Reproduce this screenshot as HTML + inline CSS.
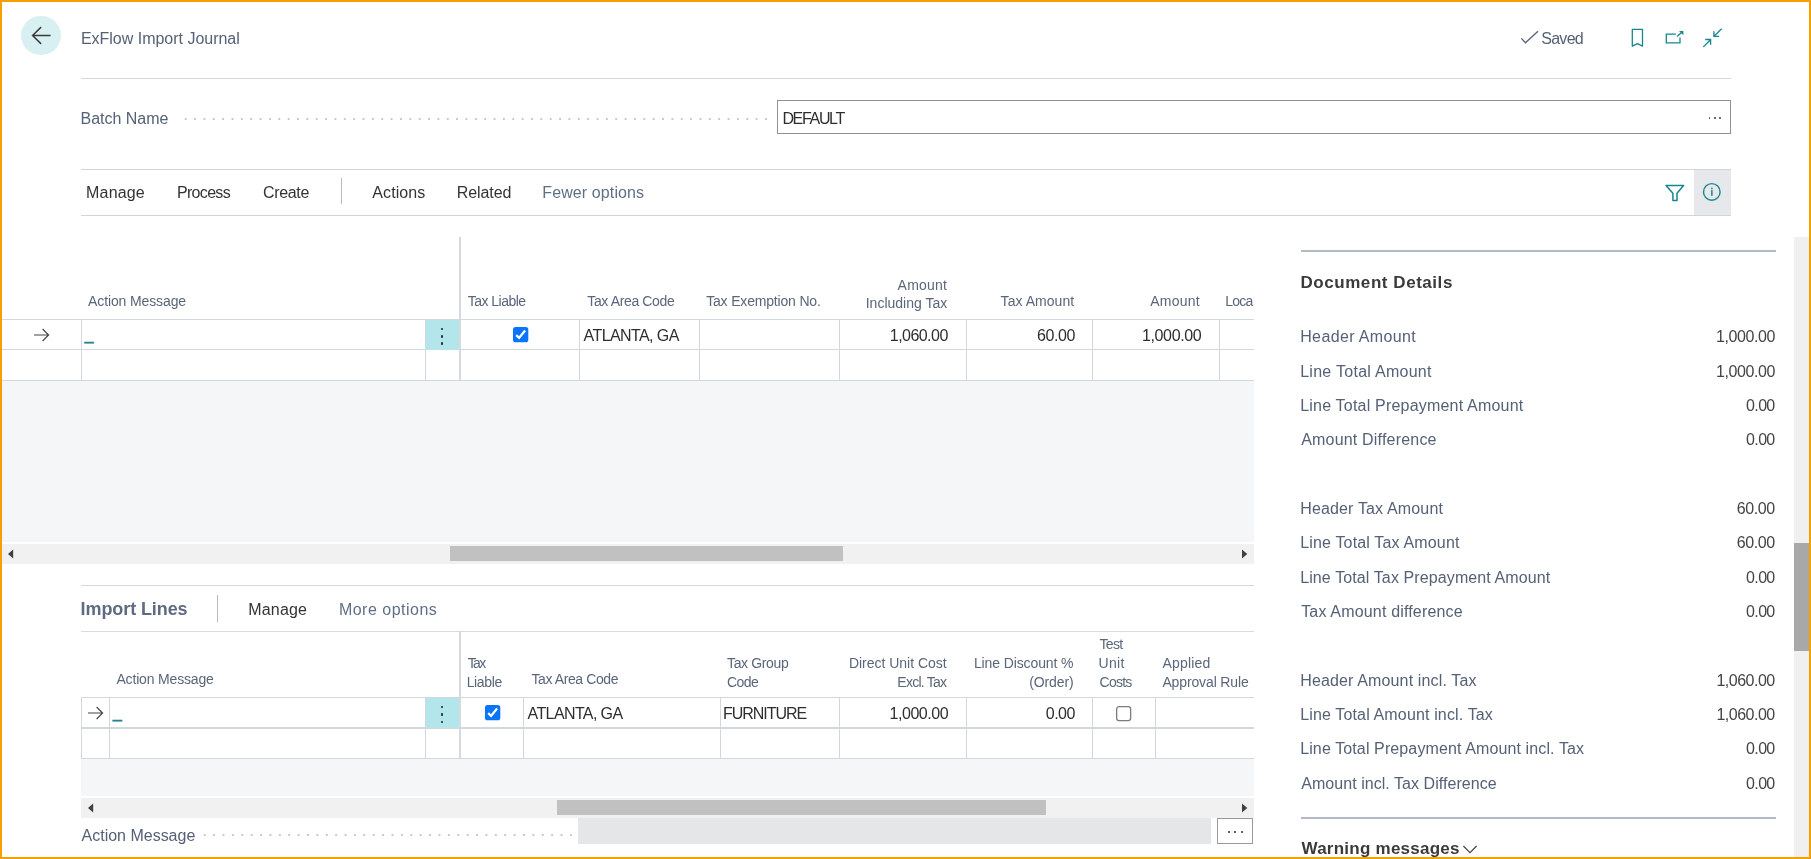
<!DOCTYPE html>
<html lang="en">
<head>
<meta charset="utf-8">
<title>ExFlow Import Journal</title>
<style>
*{box-sizing:border-box;margin:0;padding:0}
html,body{width:1811px;height:859px;overflow:hidden;background:#fff}
body{position:relative;font-family:"Liberation Sans",sans-serif;color:#333}
#page{position:absolute;left:0;top:0;width:1811px;height:859px;overflow:hidden;background:#fff;will-change:transform}
#frame{position:absolute;left:0;top:0;width:1811px;height:859px;border:2px solid #F5A000;z-index:50;pointer-events:none}
.t{position:absolute;white-space:nowrap;line-height:1;display:block}
.b{position:absolute;display:block}
.hl{position:absolute;height:1px;background:#D3D8DE}
.vl{position:absolute;width:1px;background:#D3D8DE}
svg{position:absolute;overflow:visible}
.sb{-webkit-text-stroke:0.45px currentColor}
.bd{font-weight:700}
.us{-webkit-text-stroke:0.5px currentColor}
.clip{position:absolute;overflow:hidden}
</style>
</head>
<body>
<div id="page">
<div class="b" style="left:21.2px;top:15.7px;width:39.8px;height:39.8px;background:#D9F0F2;border-radius:50%;"></div>
<svg style="left:21px;top:15px" width="40" height="40" viewBox="0 0 40 40" ><path d="M29.6 20.5H11.6M20.1 12.1L11.6 20.5L20.1 28.9" fill="none" stroke="#3A3A3A" stroke-width="1.5" stroke-linecap="butt" stroke-linejoin="miter"/></svg>
<div class="b" style="left:81px;top:78px;width:1650px;height:1.2px;background:#D5D9DF;"></div>
<svg style="left:1518px;top:28px" width="24" height="18" viewBox="0 0 24 18" ><path d="M3.4 10.4L7.4 14.8L20 3.2" fill="none" stroke="#55627A" stroke-width="1.3"/></svg>
<svg style="left:1628px;top:26px" width="20" height="24" viewBox="0 0 20 24" ><path d="M4.3 3.3H14.5V20.2L9.4 17.7L4.3 20.2Z" fill="none" stroke="#16878F" stroke-width="1.3" stroke-linejoin="round"/></svg>
<svg style="left:1662px;top:26px" width="26" height="22" viewBox="0 0 26 22" ><path d="M13.9 8.2H4.3V16.8H18V11.6" fill="none" stroke="#16878F" stroke-width="1.3"/><path d="M15.1 10.5L20 6.1" fill="none" stroke="#16878F" stroke-width="1.3"/><path d="M17 5H21.4V9.2Z" fill="#16878F"/></svg>
<svg style="left:1700px;top:26px" width="26" height="24" viewBox="0 0 26 24" ><path d="M21.6 2.8L14.2 10M13.9 5.2V10.4H19.2" fill="none" stroke="#16878F" stroke-width="1.3"/><path d="M3.3 20.9L10.3 14M5.2 13.5H10.6V18.8" fill="none" stroke="#16878F" stroke-width="1.3"/></svg>
<div class="b" style="left:180.72px;top:116.5px;width:590.31px;height:4px;background-image:radial-gradient(circle at center,#C3C9D1 0.95px,transparent 1.4px);background-size:9.37px 4px;background-repeat:repeat-x;"></div>
<div class="b" style="left:777px;top:99.9px;width:954px;height:34.1px;background:#fff;border:1px solid #919191;"></div>
<div class="b" style="left:1708.6999999999998px;top:117.2px;width:1.8px;height:1.8px;background:#444;border-radius:50%;"></div>
<div class="b" style="left:1713.8999999999999px;top:117.2px;width:1.8px;height:1.8px;background:#444;border-radius:50%;"></div>
<div class="b" style="left:1719.1px;top:117.2px;width:1.8px;height:1.8px;background:#444;border-radius:50%;"></div>
<div class="b" style="left:81px;top:169.2px;width:1650px;height:1.3px;background:#D0D5DB;"></div>
<div class="b" style="left:81px;top:214.7px;width:1650px;height:1.3px;background:#D0D5DB;"></div>
<div class="b" style="left:1694.2px;top:170.2px;width:36.8px;height:44.8px;background:#E6E8EB;"></div>
<div class="b" style="left:340.6px;top:178px;width:1.2px;height:26.3px;background:#B5BCC7;"></div>
<svg style="left:1660px;top:180px" width="30" height="26" viewBox="0 0 30 26" ><path d="M6 5.6H23.6L17 13.2V20.4H12.9V13.2Z" fill="none" stroke="#16878F" stroke-width="1.5" stroke-linejoin="round"/></svg>
<svg style="left:1700px;top:180px" width="24" height="24" viewBox="0 0 24 24" ><circle cx="11.8" cy="11.9" r="8.3" fill="none" stroke="#16878F" stroke-width="1.4"/><rect x="11.1" y="10.2" width="1.5" height="5.6" fill="#16878F"/><rect x="11.1" y="7.7" width="1.5" height="1.6" fill="#16878F"/></svg>
<div class="b" style="left:459px;top:237px;width:2px;height:143.5px;background:#D6DAE0;"></div>
<div class="b" style="left:2px;top:319.0px;width:1252px;height:1.2px;background:#D3D8DE;"></div>
<div class="b" style="left:2px;top:349.2px;width:1252px;height:1.2px;background:#D3D8DE;"></div>
<div class="b" style="left:2px;top:379.8px;width:1252px;height:1.2px;background:#D3D8DE;"></div>
<div class="b" style="left:81.0px;top:320px;width:1.0px;height:60px;background:#D3D8DE;"></div>
<div class="b" style="left:425.3px;top:320px;width:1.0px;height:60px;background:#D3D8DE;"></div>
<div class="b" style="left:579.3px;top:320px;width:1.0px;height:60px;background:#D3D8DE;"></div>
<div class="b" style="left:699.0px;top:320px;width:1.0px;height:60px;background:#D3D8DE;"></div>
<div class="b" style="left:839.1px;top:320px;width:1.0px;height:60px;background:#D3D8DE;"></div>
<div class="b" style="left:965.9px;top:320px;width:1.0px;height:60px;background:#D3D8DE;"></div>
<div class="b" style="left:1092.0px;top:320px;width:1.0px;height:60px;background:#D3D8DE;"></div>
<div class="b" style="left:1218.7px;top:320px;width:1.0px;height:60px;background:#D3D8DE;"></div>
<div class="b" style="left:426.3px;top:320.2px;width:32.9px;height:29.4px;background:#B2E6EA;"></div>
<div class="b" style="left:441.3px;top:328.29999999999995px;width:2.2px;height:2.2px;background:#333;border-radius:35%;"></div>
<div class="b" style="left:441.3px;top:335.4px;width:2.2px;height:2.2px;background:#333;border-radius:35%;"></div>
<div class="b" style="left:441.3px;top:342.4px;width:2.2px;height:2.2px;background:#333;border-radius:35%;"></div>
<svg style="left:32.3px;top:325.7px" width="24" height="18" viewBox="0 0 24 18" ><path d="M2 9H16.5M10.6 3L16.6 9L10.6 15" fill="none" stroke="#444" stroke-width="1.15"/></svg>
<svg style="left:512.6px;top:327.1px" width="16" height="16" viewBox="0 0 16 16" ><rect x="0" y="0" width="15.3" height="15.3" rx="2.6" fill="#0A74FA"/><path d="M3.2 8.1L6.1 10.9L12.1 3.6" fill="none" stroke="#fff" stroke-width="2.3" stroke-linecap="butt"/></svg>
<div class="b" style="left:2px;top:381.2px;width:1252px;height:161.3px;background:#F5F6F8;"></div>
<div class="b" style="left:2px;top:543.8px;width:1252px;height:19.8px;background:#F1F1F1;"></div>
<div class="b" style="left:449.7px;top:546px;width:393.2px;height:15px;background:#C1C1C1;"></div>
<svg style="left:5.9px;top:547.6px" width="10" height="12" viewBox="0 0 10 12" ><path d="M2 6L7.2 1.6V10.4Z" fill="#404040"/></svg>
<svg style="left:1239.5px;top:547.6px" width="10" height="12" viewBox="0 0 10 12" ><path d="M7.3 6L2 1.6V10.4Z" fill="#404040"/></svg>
<div class="b" style="left:81px;top:584.6px;width:1173px;height:1.3px;background:#D4D8DE;"></div>
<div class="b" style="left:216.7px;top:595.3px;width:1.2px;height:26.5px;background:#B5BCC7;"></div>
<div class="b" style="left:81px;top:630.5px;width:1173px;height:1.2px;background:#D9DDE3;"></div>
<div class="b" style="left:459px;top:631px;width:2px;height:127.5px;background:#D6DAE0;"></div>
<div class="b" style="left:81px;top:697.0px;width:1173px;height:1.2px;background:#D3D8DE;"></div>
<div class="b" style="left:81px;top:727.4px;width:1173px;height:1.2px;background:#D3D8DE;"></div>
<div class="b" style="left:81px;top:757.8px;width:1173px;height:1.2px;background:#D3D8DE;"></div>
<div class="b" style="left:80.8px;top:698px;width:1.0px;height:60px;background:#D3D8DE;"></div>
<div class="b" style="left:109.0px;top:698px;width:1.0px;height:60px;background:#D3D8DE;"></div>
<div class="b" style="left:425.3px;top:698px;width:1.0px;height:60px;background:#D3D8DE;"></div>
<div class="b" style="left:523.3px;top:698px;width:1.0px;height:60px;background:#D3D8DE;"></div>
<div class="b" style="left:719.9px;top:698px;width:1.0px;height:60px;background:#D3D8DE;"></div>
<div class="b" style="left:839.1px;top:698px;width:1.0px;height:60px;background:#D3D8DE;"></div>
<div class="b" style="left:965.9px;top:698px;width:1.0px;height:60px;background:#D3D8DE;"></div>
<div class="b" style="left:1092.0px;top:698px;width:1.0px;height:60px;background:#D3D8DE;"></div>
<div class="b" style="left:1155.1px;top:698px;width:1.0px;height:60px;background:#D3D8DE;"></div>
<div class="b" style="left:426.3px;top:698.2px;width:32.9px;height:29.6px;background:#B2E6EA;"></div>
<div class="b" style="left:441.3px;top:706.3px;width:2.2px;height:2.2px;background:#333;border-radius:35%;"></div>
<div class="b" style="left:441.3px;top:713.4px;width:2.2px;height:2.2px;background:#333;border-radius:35%;"></div>
<div class="b" style="left:441.3px;top:720.5px;width:2.2px;height:2.2px;background:#333;border-radius:35%;"></div>
<svg style="left:86.3px;top:703.9px" width="24" height="18" viewBox="0 0 24 18" ><path d="M2 9H16.5M10.6 3L16.6 9L10.6 15" fill="none" stroke="#444" stroke-width="1.15"/></svg>
<svg style="left:484.5px;top:705.3px" width="16" height="16" viewBox="0 0 16 16" ><rect x="0" y="0" width="15.3" height="15.3" rx="2.6" fill="#0A74FA"/><path d="M3.2 8.1L6.1 10.9L12.1 3.6" fill="none" stroke="#fff" stroke-width="2.3" stroke-linecap="butt"/></svg>
<svg style="left:1116.3px;top:705.6px" width="16" height="16" viewBox="0 0 16 16" ><rect x="0.65" y="0.65" width="14" height="14" rx="2.4" fill="#fff" stroke="#7C7C7C" stroke-width="1.3"/></svg>
<div class="b" style="left:81px;top:759.2px;width:1173px;height:37.3px;background:#F5F6F8;"></div>
<div class="b" style="left:81px;top:798px;width:1173px;height:19.6px;background:#F1F1F1;"></div>
<div class="b" style="left:557.2px;top:800px;width:489.2px;height:15px;background:#C1C1C1;"></div>
<svg style="left:85.9px;top:802px" width="10" height="12" viewBox="0 0 10 12" ><path d="M2 6L7.2 1.6V10.4Z" fill="#404040"/></svg>
<svg style="left:1239.5px;top:802px" width="10" height="12" viewBox="0 0 10 12" ><path d="M7.3 6L2 1.6V10.4Z" fill="#404040"/></svg>
<div class="b" style="left:199.5px;top:833.3px;width:376.0px;height:4px;background-image:radial-gradient(circle at center,#C3C9D1 0.95px,transparent 1.4px);background-size:9.4px 4px;background-repeat:repeat-x;"></div>
<div class="b" style="left:578px;top:817.6px;width:633.2px;height:26.5px;background:#E5E6E8;"></div>
<div class="b" style="left:1217.3px;top:818px;width:36.1px;height:26.4px;background:#fff;border:1px solid #9A9A9A;"></div>
<div class="b" style="left:1227.6px;top:831px;width:2px;height:2px;background:#333;border-radius:50%;"></div>
<div class="b" style="left:1234.4px;top:831px;width:2px;height:2px;background:#333;border-radius:50%;"></div>
<div class="b" style="left:1241.3px;top:831px;width:2px;height:2px;background:#333;border-radius:50%;"></div>
<div class="b" style="left:1301px;top:249.8px;width:474.5px;height:2px;background:#B3BAC5;"></div>
<div class="b" style="left:1301px;top:816.9px;width:474.5px;height:2px;background:#B3BAC5;"></div>
<div class="b" style="left:1794.2px;top:237px;width:14.8px;height:620px;background:#F0F0F0;"></div>
<div class="b" style="left:1794.2px;top:542.7px;width:14.8px;height:108.2px;background:#A8A8A8;"></div>
<svg style="left:1460px;top:842px" width="20" height="14" viewBox="0 0 20 14" ><path d="M3.4 4L10 10.6L16.6 4" fill="none" stroke="#444" stroke-width="1.2"/></svg>
<span class="t" style="left:80.90px;top:31.00px;font-size:16px;letter-spacing:-0.012px;color:#556176">ExFlow Import Journal</span>
<span class="t" style="left:1541.30px;top:31.00px;font-size:16px;letter-spacing:-0.747px;color:#556176">Saved</span>
<span class="t" style="left:80.50px;top:111.00px;font-size:16px;letter-spacing:-0.018px;color:#556176">Batch Name</span>
<span class="t" style="left:782.40px;top:111.00px;font-size:16px;letter-spacing:-1.325px;color:#2E2E2E">DEFAULT</span>
<span class="t" style="left:86.10px;top:185.00px;font-size:16px;letter-spacing:0.171px;color:#333333">Manage</span>
<span class="t" style="left:177.00px;top:185.00px;font-size:16px;letter-spacing:-0.688px;color:#333333">Process</span>
<span class="t" style="left:263.00px;top:185.00px;font-size:16px;letter-spacing:-0.349px;color:#333333">Create</span>
<span class="t" style="left:372.30px;top:185.00px;font-size:16px;letter-spacing:0.101px;color:#333333">Actions</span>
<span class="t" style="left:456.80px;top:185.00px;font-size:16px;letter-spacing:-0.094px;color:#333333">Related</span>
<span class="t" style="left:542.30px;top:185.00px;font-size:16px;letter-spacing:0.107px;color:#5F6F86">Fewer options</span>
<span class="t" style="left:88.10px;top:294.00px;font-size:14px;letter-spacing:-0.125px;color:#5A6679">Action Message</span>
<span class="t" style="left:467.70px;top:294.00px;font-size:14px;letter-spacing:-0.519px;color:#5A6679">Tax Liable</span>
<span class="t" style="left:587.30px;top:294.00px;font-size:14px;letter-spacing:-0.367px;color:#5A6679">Tax Area Code</span>
<span class="t" style="left:706.20px;top:294.00px;font-size:14px;letter-spacing:-0.178px;color:#5A6679">Tax Exemption No.</span>
<span class="t" style="left:897.60px;top:278.00px;font-size:14px;letter-spacing:0.207px;color:#5A6679">Amount</span>
<span class="t" style="left:865.70px;top:296.00px;font-size:14px;letter-spacing:0.006px;color:#5A6679">Including Tax</span>
<span class="t" style="left:1000.60px;top:294.00px;font-size:14px;letter-spacing:0.044px;color:#5A6679">Tax Amount</span>
<span class="t" style="left:1150.20px;top:294.00px;font-size:14px;letter-spacing:0.224px;color:#5A6679">Amount</span>
<span class="t us" style="left:84.80px;top:327.00px;font-size:16px;letter-spacing:0.000px;color:#1F8189">_</span>
<span class="t" style="left:583.60px;top:328.00px;font-size:16px;letter-spacing:-0.589px;color:#2E2E2E">ATLANTA, GA</span>
<span class="t" style="left:889.80px;top:328.00px;font-size:16px;letter-spacing:-0.543px;color:#2E2E2E">1,060.00</span>
<span class="t" style="left:1037.00px;top:328.00px;font-size:16px;letter-spacing:-0.416px;color:#2E2E2E">60.00</span>
<span class="t" style="left:1142.00px;top:328.00px;font-size:16px;letter-spacing:-0.373px;color:#2E2E2E">1,000.00</span>
<span class="t bd" style="left:80.60px;top:600.00px;font-size:18px;letter-spacing:-0.091px;color:#5F6B80">Import Lines</span>
<span class="t" style="left:248.30px;top:602.00px;font-size:16px;letter-spacing:0.171px;color:#333333">Manage</span>
<span class="t" style="left:338.90px;top:602.00px;font-size:16px;letter-spacing:0.490px;color:#5F6F86">More options</span>
<span class="t" style="left:116.40px;top:672.00px;font-size:14px;letter-spacing:-0.164px;color:#5A6679">Action Message</span>
<span class="t" style="left:467.70px;top:656.00px;font-size:14px;letter-spacing:-1.647px;color:#5A6679">Tax</span>
<span class="t" style="left:466.70px;top:675.00px;font-size:14px;letter-spacing:-0.358px;color:#5A6679">Liable</span>
<span class="t" style="left:531.40px;top:672.00px;font-size:14px;letter-spacing:-0.398px;color:#5A6679">Tax Area Code</span>
<span class="t" style="left:727.00px;top:656.00px;font-size:14px;letter-spacing:-0.351px;color:#5A6679">Tax Group</span>
<span class="t" style="left:727.00px;top:675.00px;font-size:14px;letter-spacing:-0.528px;color:#5A6679">Code</span>
<span class="t" style="left:848.90px;top:656.00px;font-size:14px;letter-spacing:-0.016px;color:#5A6679">Direct Unit Cost</span>
<span class="t" style="left:897.30px;top:675.00px;font-size:14px;letter-spacing:-0.752px;color:#5A6679">Excl. Tax</span>
<span class="t" style="left:973.90px;top:656.00px;font-size:14px;letter-spacing:-0.109px;color:#5A6679">Line Discount %</span>
<span class="t" style="left:1029.20px;top:675.00px;font-size:14px;letter-spacing:-0.093px;color:#5A6679">(Order)</span>
<span class="t" style="left:1099.60px;top:637.00px;font-size:14px;letter-spacing:-0.734px;color:#5A6679">Test</span>
<span class="t" style="left:1098.60px;top:656.00px;font-size:14px;letter-spacing:0.291px;color:#5A6679">Unit</span>
<span class="t" style="left:1099.60px;top:675.00px;font-size:14px;letter-spacing:-0.775px;color:#5A6679">Costs</span>
<span class="t" style="left:1162.40px;top:656.00px;font-size:14px;letter-spacing:0.212px;color:#5A6679">Applied</span>
<span class="t" style="left:1162.40px;top:675.00px;font-size:14px;letter-spacing:-0.130px;color:#5A6679">Approval Rule</span>
<span class="t us" style="left:113.00px;top:705.00px;font-size:16px;letter-spacing:0.000px;color:#1F8189">_</span>
<span class="t" style="left:527.60px;top:706.00px;font-size:16px;letter-spacing:-0.619px;color:#2E2E2E">ATLANTA, GA</span>
<span class="t" style="left:723.00px;top:706.00px;font-size:16px;letter-spacing:-1.034px;color:#2E2E2E">FURNITURE</span>
<span class="t" style="left:889.50px;top:706.00px;font-size:16px;letter-spacing:-0.444px;color:#2E2E2E">1,000.00</span>
<span class="t" style="left:1045.80px;top:706.00px;font-size:16px;letter-spacing:-0.519px;color:#2E2E2E">0.00</span>
<span class="t" style="left:81.60px;top:828.00px;font-size:16px;letter-spacing:-0.010px;color:#556176">Action Message</span>
<span class="t bd" style="left:1300.50px;top:274.00px;font-size:17px;letter-spacing:0.551px;color:#3A3A3A">Document Details</span>
<span class="t" style="left:1300.20px;top:329.00px;font-size:16px;letter-spacing:0.370px;color:#556176">Header Amount</span>
<span class="t" style="left:1716.00px;top:329.00px;font-size:16px;letter-spacing:-0.427px;color:#444444">1,000.00</span>
<span class="t" style="left:1300.20px;top:364.00px;font-size:16px;letter-spacing:0.275px;color:#556176">Line Total Amount</span>
<span class="t" style="left:1716.00px;top:364.00px;font-size:16px;letter-spacing:-0.427px;color:#444444">1,000.00</span>
<span class="t" style="left:1300.20px;top:398.00px;font-size:16px;letter-spacing:0.200px;color:#556176">Line Total Prepayment Amount</span>
<span class="t" style="left:1746.10px;top:398.00px;font-size:16px;letter-spacing:-0.655px;color:#444444">0.00</span>
<span class="t" style="left:1301.20px;top:432.00px;font-size:16px;letter-spacing:0.193px;color:#556176">Amount Difference</span>
<span class="t" style="left:1746.10px;top:432.00px;font-size:16px;letter-spacing:-0.655px;color:#444444">0.00</span>
<span class="t" style="left:1300.20px;top:501.00px;font-size:16px;letter-spacing:0.154px;color:#556176">Header Tax Amount</span>
<span class="t" style="left:1736.80px;top:501.00px;font-size:16px;letter-spacing:-0.391px;color:#444444">60.00</span>
<span class="t" style="left:1300.20px;top:535.00px;font-size:16px;letter-spacing:0.162px;color:#556176">Line Total Tax Amount</span>
<span class="t" style="left:1736.80px;top:535.00px;font-size:16px;letter-spacing:-0.391px;color:#444444">60.00</span>
<span class="t" style="left:1300.20px;top:570.00px;font-size:16px;letter-spacing:0.110px;color:#556176">Line Total Tax Prepayment Amount</span>
<span class="t" style="left:1746.10px;top:570.00px;font-size:16px;letter-spacing:-0.655px;color:#444444">0.00</span>
<span class="t" style="left:1301.20px;top:604.00px;font-size:16px;letter-spacing:0.172px;color:#556176">Tax Amount difference</span>
<span class="t" style="left:1746.10px;top:604.00px;font-size:16px;letter-spacing:-0.655px;color:#444444">0.00</span>
<span class="t" style="left:1300.20px;top:673.00px;font-size:16px;letter-spacing:0.142px;color:#556176">Header Amount incl. Tax</span>
<span class="t" style="left:1716.40px;top:673.00px;font-size:16px;letter-spacing:-0.486px;color:#444444">1,060.00</span>
<span class="t" style="left:1300.20px;top:707.00px;font-size:16px;letter-spacing:0.145px;color:#556176">Line Total Amount incl. Tax</span>
<span class="t" style="left:1716.40px;top:707.00px;font-size:16px;letter-spacing:-0.486px;color:#444444">1,060.00</span>
<span class="t" style="left:1300.20px;top:741.00px;font-size:16px;letter-spacing:0.116px;color:#556176">Line Total Prepayment Amount incl. Tax</span>
<span class="t" style="left:1746.10px;top:741.00px;font-size:16px;letter-spacing:-0.655px;color:#444444">0.00</span>
<span class="t" style="left:1301.20px;top:776.00px;font-size:16px;letter-spacing:0.051px;color:#556176">Amount incl. Tax Difference</span>
<span class="t" style="left:1746.10px;top:776.00px;font-size:16px;letter-spacing:-0.655px;color:#444444">0.00</span>
<span class="t bd" style="left:1301.50px;top:840.00px;font-size:17px;letter-spacing:0.243px;color:#3A3A3A">Warning messages</span>
<div class="clip" style="left:1219.5px;top:290px;width:34.3px;height:25px"><span class="t" style="left:5.70px;top:4.00px;font-size:14px;letter-spacing:-0.732px;color:#5A6679">Loca</span></div>
</div>
<div id="frame"></div>
</body>
</html>
